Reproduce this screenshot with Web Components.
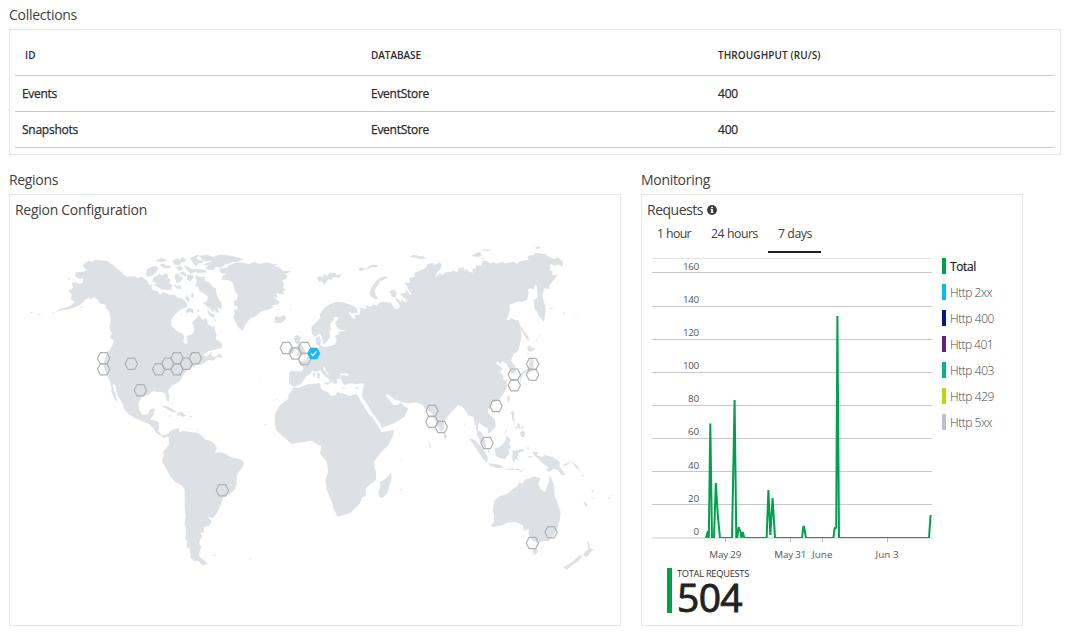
<!DOCTYPE html>
<html lang="en">
<head>
<meta charset="utf-8">
<title>Collections</title>
<style>
body{margin:0;background:#fff;color:#404040;font-family:"Open Sans","Noto Sans",sans-serif;font-size:12px}
</style>
</head>
<body>
<db-dashboard></db-dashboard>
<script>
const define=(name,html,init)=>customElements.define(name,class extends HTMLElement{
  connectedCallback(){
    if(this.shadowRoot)return;
    this.attachShadow({mode:'open'}).innerHTML=typeof html==='function'?html(this):html;
    if(init)init(this);
  }
});

/* A label tracked to occupy the width given in its w attribute. */
define('fit-text','<style>:host{display:inline-block;white-space:nowrap}</style><slot></slot>',el=>{
  const w=+el.getAttribute('w');
  if(w)el.style.letterSpacing=((w-el.getBoundingClientRect().width)/el.textContent.length).toFixed(3)+'px';
});

define('dash-section',`<style>
:host{display:flex;flex-direction:column;box-sizing:border-box}
header{height:20px;line-height:20px;font-size:14px;margin-bottom:4px}
.card{border:1px solid #e5e5e5;box-sizing:border-box;flex:1;padding:5px}
</style><header><slot name="title"></slot></header><div class="card"><slot></slot></div>`);

define('collections-table',`<style>
:host{display:block;color:#2b2b2b}
.row{display:grid;grid-template-columns:349px 347px 1fr;height:35px;border-bottom:1px solid #c8c8c8;line-height:35px;font-size:12px;-webkit-text-stroke:.25px #2b2b2b;padding-left:7px}
.head{height:40px;line-height:41px;font-size:10px;font-weight:600;-webkit-text-stroke:0}
.head>:first-child{padding-left:3px}
</style>
<div class="row head"><span><fit-text w="11">ID</fit-text></span><span><fit-text w="50">DATABASE</fit-text></span><span><fit-text w="102.5">THROUGHPUT (RU/S)</fit-text></span></div>
<div class="row"><span><fit-text w="35">Events</fit-text></span><span><fit-text w="58">EventStore</fit-text></span><span><fit-text w="20">400</fit-text></span></div>
<div class="row"><span><fit-text w="56">Snapshots</fit-text></span><span><fit-text w="58">EventStore</fit-text></span><span><fit-text w="20">400</fit-text></span></div>`);

const sites=[[103.7,358.3],[103.7,369.2],[131.3,363.8],[158.7,369.2],[167.8,363.8],[177,358.3],[177,369.2],[186.2,363.8],[195.3,358.3],[140.4,390.2],[286.3,348],[295.4,353.5],[304.6,348],[304.6,359],[432,411],[432,421.8],[441.3,427],[496,406],[514.3,374.6],[514.3,385.3],[532.6,364],[532.6,374.7],[487,443],[551,532.3],[532.4,543],[222.4,490.3]];
const hex='-6.2,0 -3.3,-5.6 3.3,-5.6 6.2,0 3.3,5.6 -3.3,5.6';

define('region-map',()=>`<style>
:host{display:block}svg{display:block}
.land{fill:#dde0e5}
.hex{fill:none;stroke:#b0b1b3;stroke-width:1.15}
.on{fill:#1ab8f2;stroke:#1ab8f2;stroke-width:.5}
</style>
<svg width="600" height="395" viewBox="15 225 600 395">
<g class="land">
<g transform="translate(20 240) scale(.33333)">
<path d="M190 75L205 62 217 65 225 60 240 61 262 63 270 70 280 75 288 84 300 92 312 105 322 110 345 109 350 114 366 110 374 118 380 120 388 135 395 132 395 148 415 155 420 165 430 155 448 164 464 164 470 172 488 176 497 185 503 195 500 203 488 205 480 210 466 222 453 240 455 258 470 272 488 281 493 290 490 306 497 313 503 308 500 288 517 282 523 270 521 255 515 248 530 234 536 224 548 240 560 234 563 252 578 262 582 255 586 275 590 284 587 298 603 307 607 320 590 328 565 334 548 345 560 350 578 332 573 346 585 352 600 340 608 353 590 352 578 362 565 360 545 373 530 375 512 385 497 395 487 410 478 425 455 438 444 452 448 470 447 485 440 482 436 462 425 455 412 457 400 452 385 465 365 470 355 490 358 512 368 525 385 522 390 508 405 505 400 525 390 540 410 542 418 550 415 572 423 585 435 585 448 582 452 590 440 590 432 594 420 585 410 580 401 566 388 553 370 545 345 535 324 521 312 508 310 495 295 470 290 460 287 437 280 432 278 440 286 460 288 474 294 488 285 480 274 456 275 445 270 425 258 400 250 375 255 355 262 335 270 330 277 315 283 303 270 293 275 280 268 265 272 240 268 215 258 204 258 195 240 190 232 178 223 172 205 180 212 170 195 180 180 195 165 202 150 207 130 209 105 217 118 208 150 199 165 185 152 178 155 162 145 153 160 143 155 130 165 125 178 132 188 128 190 115 178 117 165 108 167 97 190 95 201 90 189 80Z"/>
<path d="M142 111L150 117 149 121 144 118ZM94 220L105 216 102 221ZM48 220L65 222 56 225ZM32 216H37V219H32ZM180 202L188 199 184 205ZM380 92L383 86 399 79 408 78 415 85 410 95 394 108 382 110 378 100ZM398 119L402 110 413 108 418 100 425 108 437 99 445 106 442 114 452 118 448 129 457 136 453 146 460 148 442 151 425 148 415 142 400 134 414 129 396 125ZM408 61L425 55 443 61 428 65 412 67ZM418 75L431 70 438 78 445 74 454 81 449 85 433 85ZM456 63L472 55 480 60 487 51 498 57 495 66 483 67 480 75 466 75ZM464 83L482 78 488 84 482 92 470 91 477 87ZM466 102L479 99 477 114 483 107 489 113 481 125 470 129 465 115ZM479 98L490 94 500 103 496 111 488 105ZM491 76L505 80 516 88 538 87 557 90 557 97 535 100 526 95 512 101 501 91ZM511 55L532 44 540 48 529 53 536 60 551 62 548 69 535 70 529 79 519 70ZM539 47L563 45 580 51 595 44 623 46 646 50 671 58 650 67 637 66 621 73 601 76 606 84 588 80 579 91 564 89 554 83 565 78 549 73 571 66 576 61 557 65 544 57ZM456 130L470 138 481 136 485 146 472 147ZM503 103L520 106 519 116 510 125 500 118ZM526 105L542 111 553 108 555 123 568 127 575 139 587 145 590 162 594 173 606 191 604 208 593 201 596 220 588 215 580 202 585 220 570 207 560 197 548 190 561 183 564 170 551 160 538 153 536 143 526 138 530 125ZM517 157L523 166 520 174 511 172ZM500 166L509 176 506 188 497 178ZM497 213L504 203 518 206 522 220 510 216 500 220ZM530 211L537 207 538 217ZM560 203L570 218 585 224 581 234 567 226ZM582 235L590 242 583 242ZM590 310L607 311 604 326 597 325ZM424 499L437 497 455 505 470 517 455 516 436 504ZM472 520L484 516 501 528 487 530 480 526 470 527ZM447 525L458 528 449 530ZM508 528H516V531H508ZM453 485L458 490 455 495ZM463 482L467 492 463 488Z"/>
</g>
<g transform="translate(220 240) scale(.33333)">
<path d="M-3 86L12 84 28 82 22 78 42 70 62 67 86 72 103 65 118 72 140 67 160 72 174 73 162 77 180 83 188 92 215 94 191 104 202 104 197 117 187 121 192 131 190 141 197 151 189 152 193 163 184 163 168 160 174 174 161 172 178 185 178 193 154 196 162 201 143 209 123 214 111 226 92 235 77 252 68 272 57 265 49 252 40 231 45 218 40 210 54 207 50 198 43 198 41 182 50 181 54 164 46 156 41 143 38 128 31 123 17 119 5 119 8 108 19 101 3 100Z"/>
<path d="M0 48L18 53 38 62 19 69 8 80 0 81ZM153 233L162 238 167 228 179 232 193 225 198 236 187 247 175 250 160 247 168 240ZM291 115L300 108 308 113 313 103 324 108 327 98 346 98 350 106 365 101 358 114 340 112 332 121 326 117 313 134 306 124 296 126ZM414 88L425 80 429 86 444 83 446 78 457 74 475 76 471 82 452 82 445 88 436 86 431 91 421 94ZM449 158L456 140 468 123 480 113 499 108 502 114 480 124 473 138 463 150 468 167 475 176 465 178 451 168ZM568 51L580 44 601 49 610 49 619 56 602 58 591 54ZM222 291L232 284 242 291 239 306 252 325 258 342 225 349 235 338 228 326 234 315 224 306ZM208 326L219 319 225 329 217 341 205 343ZM211 204L215 209 210 208Z"/>
<path d="M208 395L220 392 243 395 250 388 247 378 235 368 242 362 255 362 264 350 275 347 284 337 300 322 289 313 287 295 298 288 303 302 301 315 312 321 327 319 342 315 350 303 345 288 358 282 352 275 380 272 355 268 345 250 353 240 353 230 342 232 339 243 330 250 333 265 328 278 331 290 320 306 309 313 307 295 300 280 285 291 276 281 274 260 289 247 300 235 300 222 313 205 330 193 350 185 375 188 400 198 412 206 413 218 398 220 385 216 395 232 405 237 405 225 418 225 422 210 417 203 438 207 440 195 452 201 461 192 470 198 480 187 500 186 513 188 524 206 535 208 540 198 526 178 529 170 515 171 509 153 524 149 530 160 527 172 544 187 544 176 558 189 562 182 547 170 540 162 557 158 557 147 570 164 577 165 567 151 553 127 569 129 568 114 585 111 582 99 611 87 619 82 621 73 638 68 645 75 659 66 665 74 662 86 650 99 645 114 660 98 666 105 681 95 691 97 697 92 712 96 716 84 733 82 730 90 742 88 747 95 759 98 757 86 768 85 768 76 785 78 785 66 795 61 812 70 821 67 831 71 847 65 855 70 880 65 891 72 900 63 926 59 922 47 942 44 947 38 975 42 987 50 1003 57 1014 51 1022 60 1029 64 1027 81 1014 73 1006 78 992 71 989 92 998 92 996 104 1014 106 999 122 988 137 988 148 974 144 969 159 967 166 970 178 978 207 975 229 972 245 958 231 950 214 943 205 942 180 954 172 952 162 950 138 945 133 941 150 934 145 924 148 926 162 921 180 906 185 896 184 880 190 868 194 870 211 860 239 869 241 873 233 885 241 895 240 900 256 925 290 927 303 913 289 903 266 905 287 895 334 881 340 873 363 885 377 888 397 875 402 869 388 859 372 847 362 842 373 833 364 826 371 840 379 848 386 840 395 850 408 849 417 860 423 860 443 850 463 834 483 815 488 813 506 804 505 805 520 825 540 827 560 812 576 805 579 803 565 785 555 778 547 774 560 774 570 785 580 789 588 795 600 792 612 782 600 772 588 770 568 763 548 760 530 744 526 739 516 728 500 715 495 705 504 679 534 672 549 672 566 665 576 650 555 637 522 631 515 618 511 608 495 590 487 565 490 545 487 538 482 525 479 511 468 500 462 498 467 510 484 522 496 533 495 541 486 551 497 565 506 554 530 540 539 518 552 485 563 480 548 465 530 455 515 441 491 430 477 425 464 430 445 431 430 410 432 390 430 372 436 361 415 364 404 383 408 390 402 375 400 361 400 361 415 350 417 352 430 342 431 334 420 330 408 318 394 314 379 309 387 321 402 341 413 341 421 331 429 327 417 309 404 300 390 291 396 277 392 270 401 258 409 249 425 238 435 221 440 206 430Z"/>
<path d="M221 442L234 443 264 433 300 430 303 448 323 456 334 468 347 466 351 456 370 461 388 467 410 462 419 477 427 491 445 521 459 535 470 553 485 576 505 574 523 570 516 594 505 615 480 640 462 665 464 685 468 695 468 720 450 733 437 745 438 765 425 775 420 790 390 820 353 830 342 810 335 785 320 750 316 720 325 695 320 665 300 640 305 618 290 612 275 602 245 607 215 612 190 590 168 570 164 547 165 522 180 495 205 476 206 464Z"/>
<path d="M278 402L286 396 285 415ZM291 397L300 402 298 416 291 414ZM309 428L330 426 325 435ZM361 441L377 444 370 447ZM405 444L416 439 411 447ZM754 47L770 38 785 36 781 44 790 48 768 51ZM779 30L795 28 814 29 806 34ZM782 54L794 55 789 60ZM945 22L958 19 961 25 949 27ZM988 203L1003 205 991 207ZM1026 213L1037 222 1031 222ZM1066 222H1070V225H1066ZM922 322L930 316 934 323 945 324 939 333 928 336 923 331ZM933 353L941 355 940 385 933 396 912 400 903 415 902 428 898 412 903 400 923 385ZM921 338L927 340 924 345ZM861 470L869 467 869 482 865 490ZM877 512L883 520 880 539 889 548 876 540ZM671 576L680 588 678 598 673 595ZM948 307L951 299 947 298ZM958 292L962 288 963 279ZM731 548L734 550 733 563ZM804 503L812 502 809 510ZM168 475L173 478 168 480ZM136 551H140V555H136ZM119 413H124V415H119Z"/>
</g>
<g transform="translate(150 410) scale(.33333)">
<path d="M0 30L22 34 28 48 24 65 39 78 55 72 60 63 73 57 86 54 88 66 101 62 119 66 141 68 154 75 166 89 183 93 195 103 201 114 195 128 211 127 229 133 239 140 260 145 275 150 281 156 280 169 266 187 260 198 260 221 254 239 239 252 219 263 213 281 204 302 195 318 187 324 175 321 185 335 178 347 161 351 162 366 151 368 157 378 149 392 148 402 155 410 147 429 149 440 167 455 174 461 158 466 144 452 132 453 121 442 120 416 109 411 113 395 106 385 108 353 104 341 107 320 104 293 104 238 94 226 73 214 60 197 50 178 37 157 38 145 42 136 39 125 50 113 57 103 57 84 52 77 41 83 22 69 2 43Z"/>
<path d="M723 186L725 205 712 249 698 263 688 261 685 245 691 232 690 216 706 207 718 195ZM187 435L201 434 193 439ZM294 444L305 447 302 449ZM143 54L145 60 142 63ZM744 239L759 238 752 241ZM343 43L347 44 345 47ZM749 147L755 149 751 151Z"/>
</g>
<g transform="translate(400 400) scale(.33333)">
<path d="M272 375L281 369 282 345 278 330 284 301 301 287 323 281 338 268 351 259 360 247 367 251 376 237 391 235 400 229 422 235 414 252 423 268 435 277 445 248 451 226 458 245 462 258 464 286 473 309 482 336 479 363 471 386 460 407 447 423 428 424 410 429 394 418 386 404 386 387 371 393 369 376 347 366 321 368 307 376 280 382ZM398 447L414 446 412 458 402 466ZM560 416L567 429 570 444 581 448 570 460 558 472 549 464 556 455 565 446 563 429ZM541 464L548 469 536 482 516 496 500 510 490 502 517 485ZM550 303L561 312 564 321 553 314ZM624 291L632 293 628 299ZM635 285L640 287 635 290ZM574 263L581 278 576 276ZM579 291H582V300ZM512 181L531 196 542 214 528 203ZM544 218L555 233 547 229ZM578 503H582V506ZM0 266L8 268 0 271ZM645 240H650V243H645ZM208 116L222 118 238 134 251 151 264 171 261 188 247 175 231 150 218 130ZM232 96L245 105 259 135 257 145 240 124ZM264 190L285 191 303 196 312 204 291 204 271 198ZM316 205L329 206 340 205 341 210 326 210ZM342 207L364 207 356 211 344 211ZM355 217L372 208 363 217ZM284 145L298 142 315 125 320 106 333 119 327 131 333 141 326 151 327 161 315 178 300 174 288 169ZM338 150L346 153 364 146 375 151 352 161 358 166 350 169 356 182 347 176 343 187 337 181ZM381 143L386 139 385 154ZM383 169L397 168 390 174ZM398 155L414 156 411 166 427 172 433 164 459 172 480 187 478 198 493 219 496 226 485 225 474 211 461 206 447 216 439 209 445 202 424 187 412 173 401 164ZM488 194L503 190 510 181 506 193 494 198ZM333 37L338 31 342 43 342 55 351 62 338 56ZM345 83L356 74 349 88ZM351 69L359 71 361 87 355 85ZM363 75L373 83 364 88ZM359 99L369 89 376 100 372 111 364 111ZM343 65L348 68 344 72ZM324 85L318 96 310 100ZM263 145L270 158 264 158ZM133 97L141 109 138 116 131 113ZM268 16L278 11 278 20ZM85 117L93 137 91 148Z"/>
</g></g>
${sites.map(([x,y])=>`<polygon class="hex" points="${hex}" transform="translate(${x} ${y})"/>`).join('')}
<g transform="translate(313.8 353.5)"><polygon class="on" points="${hex}"/><path d="M-2.8 .1L-.9 2 2.8-2.1" fill="none" stroke="#fff" stroke-width="1.3"/></g>
</svg>`);

define('region-panel',`<style>
:host{display:block}
h3{margin:0;height:20px;line-height:20px;font-size:14px;font-weight:400;margin-bottom:5px}
</style><h3><fit-text w="132">Region Configuration</fit-text></h3><region-map></region-map>`);

define('time-tabs',`<style>
:host{display:flex;height:33px;box-sizing:border-box}
span{box-sizing:border-box;height:33px;padding:4px 10px 0;line-height:20px;font-size:12.3px}
.on{border-bottom:2px solid #222;padding-right:9px}
</style><span><fit-text w="34">1 hour</fit-text></span><span><fit-text w="47">24 hours</fit-text></span><span class="on"><fit-text w="34">7 days</fit-text></span>`);

const grid=[[272,160,270],[306,140,303],[339,120,336],[372,100,369],[405,80,402],[438,60,435],[471,40,469],[504,20,502]];
const series=[[706,537.5],[708,531],[708.8,537.5],[710.3,423.5],[712,537.5],[714,537.5],[715.8,483],[717.8,515],[720,537.5],[732,537.5],[734.6,400],[736.3,537.5],[737.3,537.5],[738.6,527],[740.6,532],[741.3,537.5],[742.8,532],[744.3,537.5],[766.6,537.5],[768.4,490],[770.3,535],[772.6,498],[775,537.5],[802,537.5],[803.3,526.5],[804,526.5],[806,537.5],[833.4,537.5],[834.7,528],[836.2,528],[837.4,316],[839,537.5],[929,537.5],[930.6,515]];
define('requests-chart',()=>`<style>
:host{display:block}svg{display:block}
text{font-size:9.8px;fill:#555}
</style><svg width="280" height="306" viewBox="652 258 280 306">
<defs><clipPath id="plot"><path d="M652 258H932V538H652Z"/></clipPath></defs>
<path d="M652 258.5H932" stroke="#e3e3e3"/>
${grid.map(([y,v,b])=>`<path d="M652 ${y+.5}H932" stroke="#c8c8c8"/><text x="${v>=100?683:688}" y="${b}" textLength="${v>=100?16:11}">${v}</text>`).join('')}
<text x="693.5" y="535">0</text>
<path d="M652 538H932" stroke="#c8c8c8"/>
<path d="M725.5 538V542M790.5 538V542M822.5 538V542M887.5 538V542" stroke="#bbb"/>
<polyline clip-path="url(#plot)" points="${series.map(p=>p[0]+','+(p[1]===537.5?538:p[1])).join(' ')}" fill="none" stroke="#00a14b" stroke-width="2" stroke-linejoin="bevel"/>
<text x="709.3" y="558" textLength="32">May 29</text><text x="774.3" y="558" textLength="32">May 31</text><text x="812" y="558" textLength="20.5">June</text><text x="875.5" y="558" textLength="23">Jun 3</text>
</svg>`);

define('legend-item',el=>`<style>
:host{display:flex;height:16px;line-height:18px;font-size:12px;color:#444;font-weight:300}
:host([active]){color:#222;font-weight:400;-webkit-text-stroke:.2px #222}
i{width:4px;height:16px;margin-right:4px;background:${el.getAttribute('color')}}
</style><i></i><slot></slot>`);

define('chart-legend',`<style>:host{display:flex;flex-direction:column;gap:10px}</style>
<legend-item active color="#00a14b"><fit-text w="26">Total</fit-text></legend-item>
<legend-item color="#00bcf2"><fit-text w="42">Http 2xx</fit-text></legend-item>
<legend-item color="#00188f"><fit-text w="44">Http 400</fit-text></legend-item>
<legend-item color="#68217a"><fit-text w="43">Http 401</fit-text></legend-item>
<legend-item color="#00b294"><fit-text w="44">Http 403</fit-text></legend-item>
<legend-item color="#bad80a"><fit-text w="44">Http 429</fit-text></legend-item>
<legend-item color="#bac2cc"><fit-text w="42">Http 5xx</fit-text></legend-item>`);

define('total-metric',`<style>
:host{display:flex;height:45px;margin:4px 0 0 20px}
i{width:5px;background:#00a14b;margin-right:5px}
div{display:flex;flex-direction:column;color:#222}
.l{font-size:9.3px;line-height:11px;height:11px;color:#333}
.v{font-size:39px;line-height:36px;height:34px;-webkit-text-stroke:.9px #222}
</style><i></i><div><span class="l"><fit-text w="72">TOTAL REQUESTS</fit-text></span><span class="v"><fit-text w="65">504</fit-text></span></div>`);

define('monitor-panel',`<style>
:host{display:block}
h3{margin:0;height:20px;font-size:14px;line-height:20px;font-weight:400;display:flex;align-items:center;gap:4px}
.body{display:flex;gap:10px;padding:5px 0 0 5px}
</style><h3><fit-text w="56">Requests</fit-text><svg width="10" height="10" viewBox="0 0 11 11"><circle cx="5.5" cy="5.5" r="5.4" fill="#3a3a3a"/><path d="M4.6 2H6.5V3.6H4.6ZM4 4.5H6.5V8H7.2V8.9H4V8H4.6V5.4H4Z" fill="#fff"/></svg></h3>
<time-tabs></time-tabs><div class="body"><requests-chart></requests-chart><chart-legend></chart-legend></div><total-metric></total-metric>`);

define('db-dashboard',`<style>
:host{display:flex;flex-direction:column;gap:15px;width:1070px;height:637px;box-sizing:border-box;padding:5px 9px 11px;overflow:hidden}
.top{width:1052px;height:150px}
.bottom{display:flex;gap:20px;height:456px}
.r{width:612px}.m{width:382px}
</style>
<dash-section class="top"><fit-text slot="title" w="68">Collections</fit-text><collections-table></collections-table></dash-section>
<div class="bottom"><dash-section class="r"><fit-text slot="title" w="49">Regions</fit-text><region-panel></region-panel></dash-section>
<dash-section class="m"><fit-text slot="title" w="69">Monitoring</fit-text><monitor-panel></monitor-panel></dash-section></div>`);
</script>
</body>
</html>
